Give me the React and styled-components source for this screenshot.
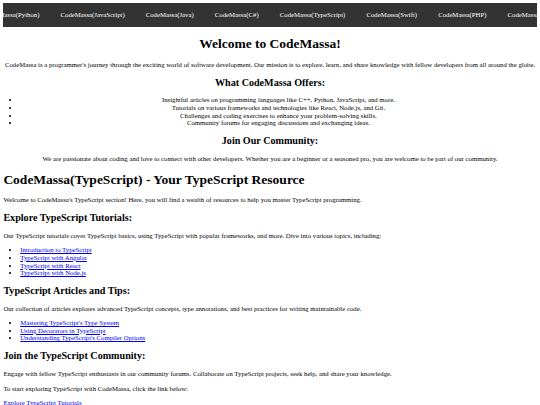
import React from "react";
import styled, { createGlobalStyle } from "styled-components";

/* The reference is a 1280px-wide page photographed at 540px: every length is scaled by S. */
const S = 0.421875;
const px = (n) => `${(n * S).toFixed(3)}px`;

const GlobalStyle = createGlobalStyle`
  body {
    margin: ${px(8)};
    background: #ffffff;
    color: #000000;
    font-family: "Liberation Serif", "Times New Roman", serif;
    font-size: ${px(16)};
    line-height: ${px(18)};
  }
`;

const Nav = styled.nav`
  display: flex;
  justify-content: center;
  align-items: center;
  height: ${px(56)};
  background: #333333;
  overflow: hidden;
`;

const NavLink = styled.a`
  flex: none;
  padding: 0 ${px(25)};
  color: #ffffff;
  text-decoration: none;
  white-space: nowrap;
  font-size: ${px(16)};
`;

const Section = styled.section`
  text-align: ${(p) => (p.$center ? "center" : "left")};
`;

const Title = styled.h1`
  font-size: ${px(32)};
  line-height: ${px(37)};
  font-weight: bold;
  margin: ${px(21.44)} 0;
`;

const Heading = styled.h2`
  font-size: ${px(24)};
  line-height: ${px(27)};
  font-weight: bold;
  margin: ${px(19.92)} 0;
`;

const Text = styled.p`
  margin: ${px(16)} 0;
`;

const List = styled.ul`
  margin: ${px(16)} 0;
  padding-left: ${px(40)};
  list-style: disc;
`;

const Item = styled.li``;

const Link = styled.a`
  color: #0000ee;
  text-decoration: underline;
`;

const navItems = [
  "CodeMassa(Python)",
  "CodeMassa(JavaScript)",
  "CodeMassa(Java)",
  "CodeMassa(C#)",
  "CodeMassa(TypeScript)",
  "CodeMassa(Swift)",
  "CodeMassa(PHP)",
  "CodeMassa(C++)",
];

const offers = [
  "Insightful articles on programming languages like C++, Python, JavaScript, and more.",
  "Tutorials on various frameworks and technologies like React, Node.js, and Git.",
  "Challenges and coding exercises to enhance your problem-solving skills.",
  "Community forums for engaging discussions and exchanging ideas.",
];

const tutorials = [
  "Introduction to TypeScript",
  "TypeScript with Angular",
  "TypeScript with React",
  "TypeScript with Node.js",
];

const articles = [
  "Mastering TypeScript's Type System",
  "Using Decorators in TypeScript",
  "Understanding TypeScript's Compiler Options",
];

export default function App() {
  return (
    <>
      <GlobalStyle />
      <Nav>
        {navItems.map((n) => (
          <NavLink key={n} href="#">
            {n}
          </NavLink>
        ))}
      </Nav>
      <Section $center>
        <Title>Welcome to CodeMassa!</Title>
        <Text>
          CodeMassa is a programmer's journey through the exciting world of software development. Our
          mission is to explore, learn, and share knowledge with fellow developers from all around the
          globe.
        </Text>
        <Heading>What CodeMassa Offers:</Heading>
        <List>
          {offers.map((o) => (
            <Item key={o}>{o}</Item>
          ))}
        </List>
        <Heading>Join Our Community:</Heading>
        <Text>
          We are passionate about coding and love to connect with other developers. Whether you are a
          beginner or a seasoned pro, you are welcome to be part of our community.
        </Text>
      </Section>
      <Section>
        <Title>CodeMassa(TypeScript) - Your TypeScript Resource</Title>
        <Text>
          Welcome to CodeMassa's TypeScript section! Here, you will find a wealth of resources to help
          you master TypeScript programming.
        </Text>
        <Heading>Explore TypeScript Tutorials:</Heading>
        <Text>
          Our TypeScript tutorials cover TypeScript basics, using TypeScript with popular frameworks,
          and more. Dive into various topics, including:
        </Text>
        <List>
          {tutorials.map((t) => (
            <Item key={t}>
              <Link href="#">{t}</Link>
            </Item>
          ))}
        </List>
        <Heading>TypeScript Articles and Tips:</Heading>
        <Text>
          Our collection of articles explores advanced TypeScript concepts, type annotations, and best
          practices for writing maintainable code.
        </Text>
        <List>
          {articles.map((a) => (
            <Item key={a}>
              <Link href="#">{a}</Link>
            </Item>
          ))}
        </List>
        <Heading>Join the TypeScript Community:</Heading>
        <Text>
          Engage with fellow TypeScript enthusiasts in our community forums. Collaborate on TypeScript
          projects, seek help, and share your knowledge.
        </Text>
        <Text>To start exploring TypeScript with CodeMassa, click the link below:</Text>
        <Link href="#">Explore TypeScript Tutorials</Link>
      </Section>
    </>
  );
}
